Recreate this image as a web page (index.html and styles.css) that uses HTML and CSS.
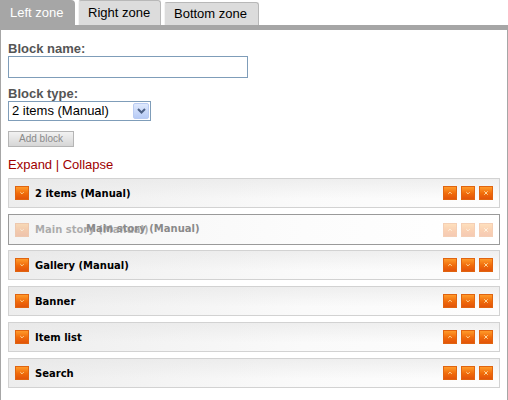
FILE: index.html
```html
<!DOCTYPE html>
<html>
<head>
<meta charset="utf-8">
<link rel="stylesheet" href="styles.css">
</head>
<body>
<div class="tabs">
  <div class="tab active">Left zone</div>
  <div class="tab hover">Right zone</div>
  <div class="tab">Bottom zone</div>
</div>
<div class="panel">
  <label class="lbl">Block name:</label>
  <div class="input"></div>
  <label class="lbl lbl2">Block type:</label>
  <div class="select"><span class="sel-text">2 items (Manual)</span><span class="sel-btn"><svg width="9" height="6" viewBox="0 0 9 6"><path d="M1 1 L4.5 4.5 L8 1" fill="none" stroke="#4d6185" stroke-width="2"/></svg></span></div>
  <div class="btn">Add block</div>
  <div class="links"><a>Expand</a> | <a>Collapse</a></div>

  <div class="blocks">
    <div class="block">
      <span class="ico"><svg viewBox="0 0 14 14"><path d="M5 6 L7 8 L9 6" class="gl"/></svg></span>
      <span class="title">2 items (Manual)</span>
      <span class="tools">
        <span class="ico"><svg viewBox="0 0 14 14"><path d="M5 8 L7 6 L9 8" class="gl"/></svg></span>
        <span class="ico"><svg viewBox="0 0 14 14"><path d="M5 6 L7 8 L9 6" class="gl"/></svg></span>
        <span class="ico"><svg viewBox="0 0 14 14"><path d="M5 5 L9 9 M9 5 L5 9" class="gl"/></svg></span>
      </span>
    </div>
    <div class="block drag">
      <div class="faded">
        <span class="ico"><svg viewBox="0 0 14 14"><path d="M5 6 L7 8 L9 6" class="gl"/></svg></span>
        <span class="title">Main story (Manual)</span>
        <span class="tools">
          <span class="ico"><svg viewBox="0 0 14 14"><path d="M5 8 L7 6 L9 8" class="gl"/></svg></span>
          <span class="ico"><svg viewBox="0 0 14 14"><path d="M5 6 L7 8 L9 6" class="gl"/></svg></span>
          <span class="ico"><svg viewBox="0 0 14 14"><path d="M5 5 L9 9 M9 5 L5 9" class="gl"/></svg></span>
        </span>
      </div>
      <span class="helper">Main story (Manual)</span>
    </div>
    <div class="block">
      <span class="ico"><svg viewBox="0 0 14 14"><path d="M5 6 L7 8 L9 6" class="gl"/></svg></span>
      <span class="title">Gallery (Manual)</span>
      <span class="tools">
        <span class="ico"><svg viewBox="0 0 14 14"><path d="M5 8 L7 6 L9 8" class="gl"/></svg></span>
        <span class="ico"><svg viewBox="0 0 14 14"><path d="M5 6 L7 8 L9 6" class="gl"/></svg></span>
        <span class="ico"><svg viewBox="0 0 14 14"><path d="M5 5 L9 9 M9 5 L5 9" class="gl"/></svg></span>
      </span>
    </div>
    <div class="block">
      <span class="ico"><svg viewBox="0 0 14 14"><path d="M5 6 L7 8 L9 6" class="gl"/></svg></span>
      <span class="title">Banner</span>
      <span class="tools">
        <span class="ico"><svg viewBox="0 0 14 14"><path d="M5 8 L7 6 L9 8" class="gl"/></svg></span>
        <span class="ico"><svg viewBox="0 0 14 14"><path d="M5 6 L7 8 L9 6" class="gl"/></svg></span>
        <span class="ico"><svg viewBox="0 0 14 14"><path d="M5 5 L9 9 M9 5 L5 9" class="gl"/></svg></span>
      </span>
    </div>
    <div class="block">
      <span class="ico"><svg viewBox="0 0 14 14"><path d="M5 6 L7 8 L9 6" class="gl"/></svg></span>
      <span class="title">Item list</span>
      <span class="tools">
        <span class="ico"><svg viewBox="0 0 14 14"><path d="M5 8 L7 6 L9 8" class="gl"/></svg></span>
        <span class="ico"><svg viewBox="0 0 14 14"><path d="M5 6 L7 8 L9 6" class="gl"/></svg></span>
        <span class="ico"><svg viewBox="0 0 14 14"><path d="M5 5 L9 9 M9 5 L5 9" class="gl"/></svg></span>
      </span>
    </div>
    <div class="block">
      <span class="ico"><svg viewBox="0 0 14 14"><path d="M5 6 L7 8 L9 6" class="gl"/></svg></span>
      <span class="title">Search</span>
      <span class="tools">
        <span class="ico"><svg viewBox="0 0 14 14"><path d="M5 8 L7 6 L9 8" class="gl"/></svg></span>
        <span class="ico"><svg viewBox="0 0 14 14"><path d="M5 6 L7 8 L9 6" class="gl"/></svg></span>
        <span class="ico"><svg viewBox="0 0 14 14"><path d="M5 5 L9 9 M9 5 L5 9" class="gl"/></svg></span>
      </span>
    </div>
  </div>
</div>
</body>
</html>
```
FILE: styles.css
```css
* { box-sizing: border-box; }
html, body { margin: 0; padding: 0; background: #fff; }
body { font-family: "Liberation Sans", Arial, sans-serif; font-size: 13px; width: 508px; }

.tabs {
  display: flex;
  align-items: flex-end;
  gap: 3px;
  height: 25px;
}
.tab {
  height: 23px;
  padding: 0 9px;
  line-height: 22px;
  font-size: 13px;
  color: #000;
  background: #dcdcdc;
  border: 1px solid #b8b8b8;
  border-left-color: #f4f4f4;
  border-bottom: none;
  border-radius: 3px 3px 0 0;
}
.tab.active {
  height: 25px;
  line-height: 25px;
  background: #a6a6a6;
  color: #fff;
  border: none;
  padding: 0 10px;
  width: 75px;
  border-radius: 0 4px 0 0;
}
.tab.hover {
  height: 25px;
  line-height: 23px;
  width: 83px;
}
.tab:last-child { width: 95px; }

.panel {
  border-top: 5px solid #a6a6a6;
  border-left: 1px solid #a6a6a6;
  border-right: 1px solid #a6a6a6;
  padding: 11px 7px 10px 7px;
  min-height: 375px;
}
.lbl {
  display: block;
  font-weight: bold;
  color: #555;
  line-height: 15px;
}
.lbl2 { margin-top: 8px; }
.input {
  width: 240px;
  height: 22px;
  border: 1px solid #7f9db9;
  background: #fff;
}
.select {
  display: flex;
  align-items: center;
  width: 143px;
  height: 20px;
  border: 1px solid #7f9db9;
  padding: 0 1px 0 3px;
}
.sel-text { flex: 1; line-height: 18px; color: #000; }
.sel-btn {
  width: 16px;
  height: 16px;
  background: linear-gradient(#dfe9fd, #b7cbf6);
  border: 1px solid #b9cbf2;
  border-radius: 2px;
  display: flex;
  align-items: center;
  justify-content: center;
}
.btn {
  margin-top: 10px;
  width: 66px;
  height: 16px;
  border: 1px solid #b5b5b5;
  background: linear-gradient(#f2f2f2, #d6d6d6);
  color: #8a8a8a;
  font-size: 10px;
  line-height: 14px;
  text-align: center;
}
.links {
  margin-top: 10px;
  line-height: 16px;
  color: #a00000;
}
.links a { color: #a00000; }

.blocks { margin-top: 5px; }
.block {
  position: relative;
  display: flex;
  align-items: center;
  height: 30px;
  margin-bottom: 6px;
  padding: 0 6px;
  border: 1px solid #d2d2d2;
  background:
    linear-gradient(to bottom, rgba(230,230,230,0.6), rgba(255,255,255,0) 70%),
    linear-gradient(to right, #ededed, #fafafa 60%, #fdfdfd);
  font-family: "DejaVu Sans", Verdana, sans-serif;
  font-size: 10px;
  font-weight: bold;
  color: #000;
}
.block.drag {
  border-color: #9a9a9a;
  height: 31px;
  margin-bottom: 5px;
  background: linear-gradient(to right, #f4f4f4, #fcfcfc 60%, #fff);
}
.faded {
  display: flex;
  align-items: center;
  flex: 1;
  opacity: 0.3;
}
.helper {
  position: absolute;
  left: 77px;
  top: 8px;
  color: #8a8a8a;
}
.title { margin-left: 6px; flex: 1; }
.tools { display: flex; gap: 4px; }
.ico {
  display: block;
  width: 14px;
  height: 14px;
  background: linear-gradient(#ff9a2a, #f06a0a 55%, #e2540a);
  border: 1px solid #e06410;
}
.ico svg { display: block; width: 12px; height: 12px; }
.gl { fill: none; stroke: #ffe9b8; stroke-width: 1; }
```
